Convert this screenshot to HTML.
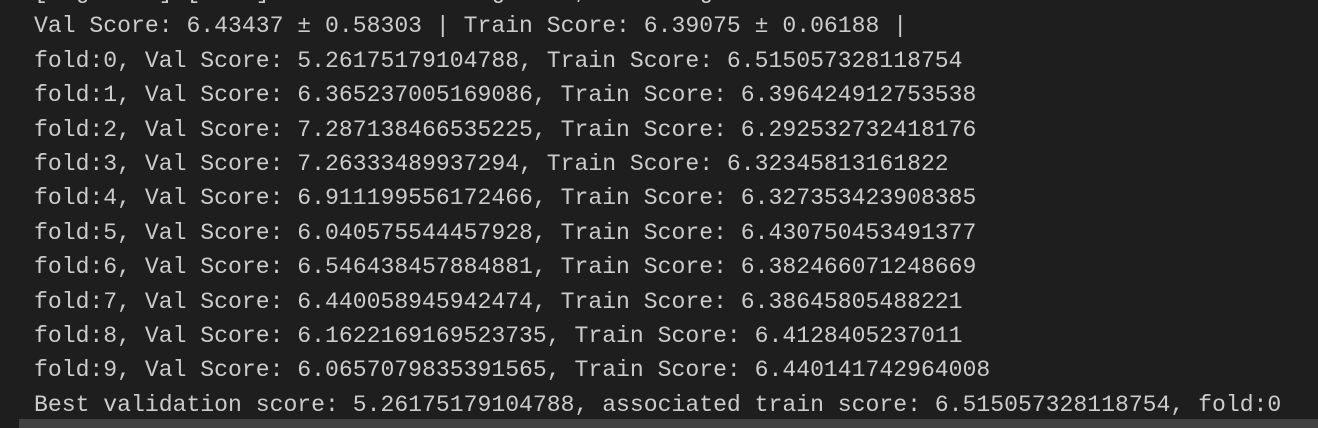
<!DOCTYPE html>
<html><head><meta charset="utf-8"><style>
html,body{margin:0;padding:0;width:1318px;height:428px;background:#1e1e1e;overflow:hidden}
.t{position:absolute;left:34px;top:-25px;font-family:"Liberation Mono",monospace;font-size:23.1px;line-height:34.4px;color:#cccccc;white-space:pre}
.sb{position:absolute;left:19px;top:419px;width:1299px;height:9px;background:#424242}
</style></head><body>
<div class="t">[LightGBM] [Info] Finished loading data, training started
Val Score: 6.43437 ± 0.58303 | Train Score: 6.39075 ± 0.06188 |
fold:0, Val Score: 5.26175179104788, Train Score: 6.515057328118754
fold:1, Val Score: 6.365237005169086, Train Score: 6.396424912753538
fold:2, Val Score: 7.287138466535225, Train Score: 6.292532732418176
fold:3, Val Score: 7.26333489937294, Train Score: 6.32345813161822
fold:4, Val Score: 6.911199556172466, Train Score: 6.327353423908385
fold:5, Val Score: 6.040575544457928, Train Score: 6.430750453491377
fold:6, Val Score: 6.546438457884881, Train Score: 6.382466071248669
fold:7, Val Score: 6.440058945942474, Train Score: 6.38645805488221
fold:8, Val Score: 6.1622169169523735, Train Score: 6.4128405237011
fold:9, Val Score: 6.0657079835391565, Train Score: 6.440141742964008
Best validation score: 5.26175179104788, associated train score: 6.515057328118754, fold:0</div>
<div class="sb"></div>
</body></html>
